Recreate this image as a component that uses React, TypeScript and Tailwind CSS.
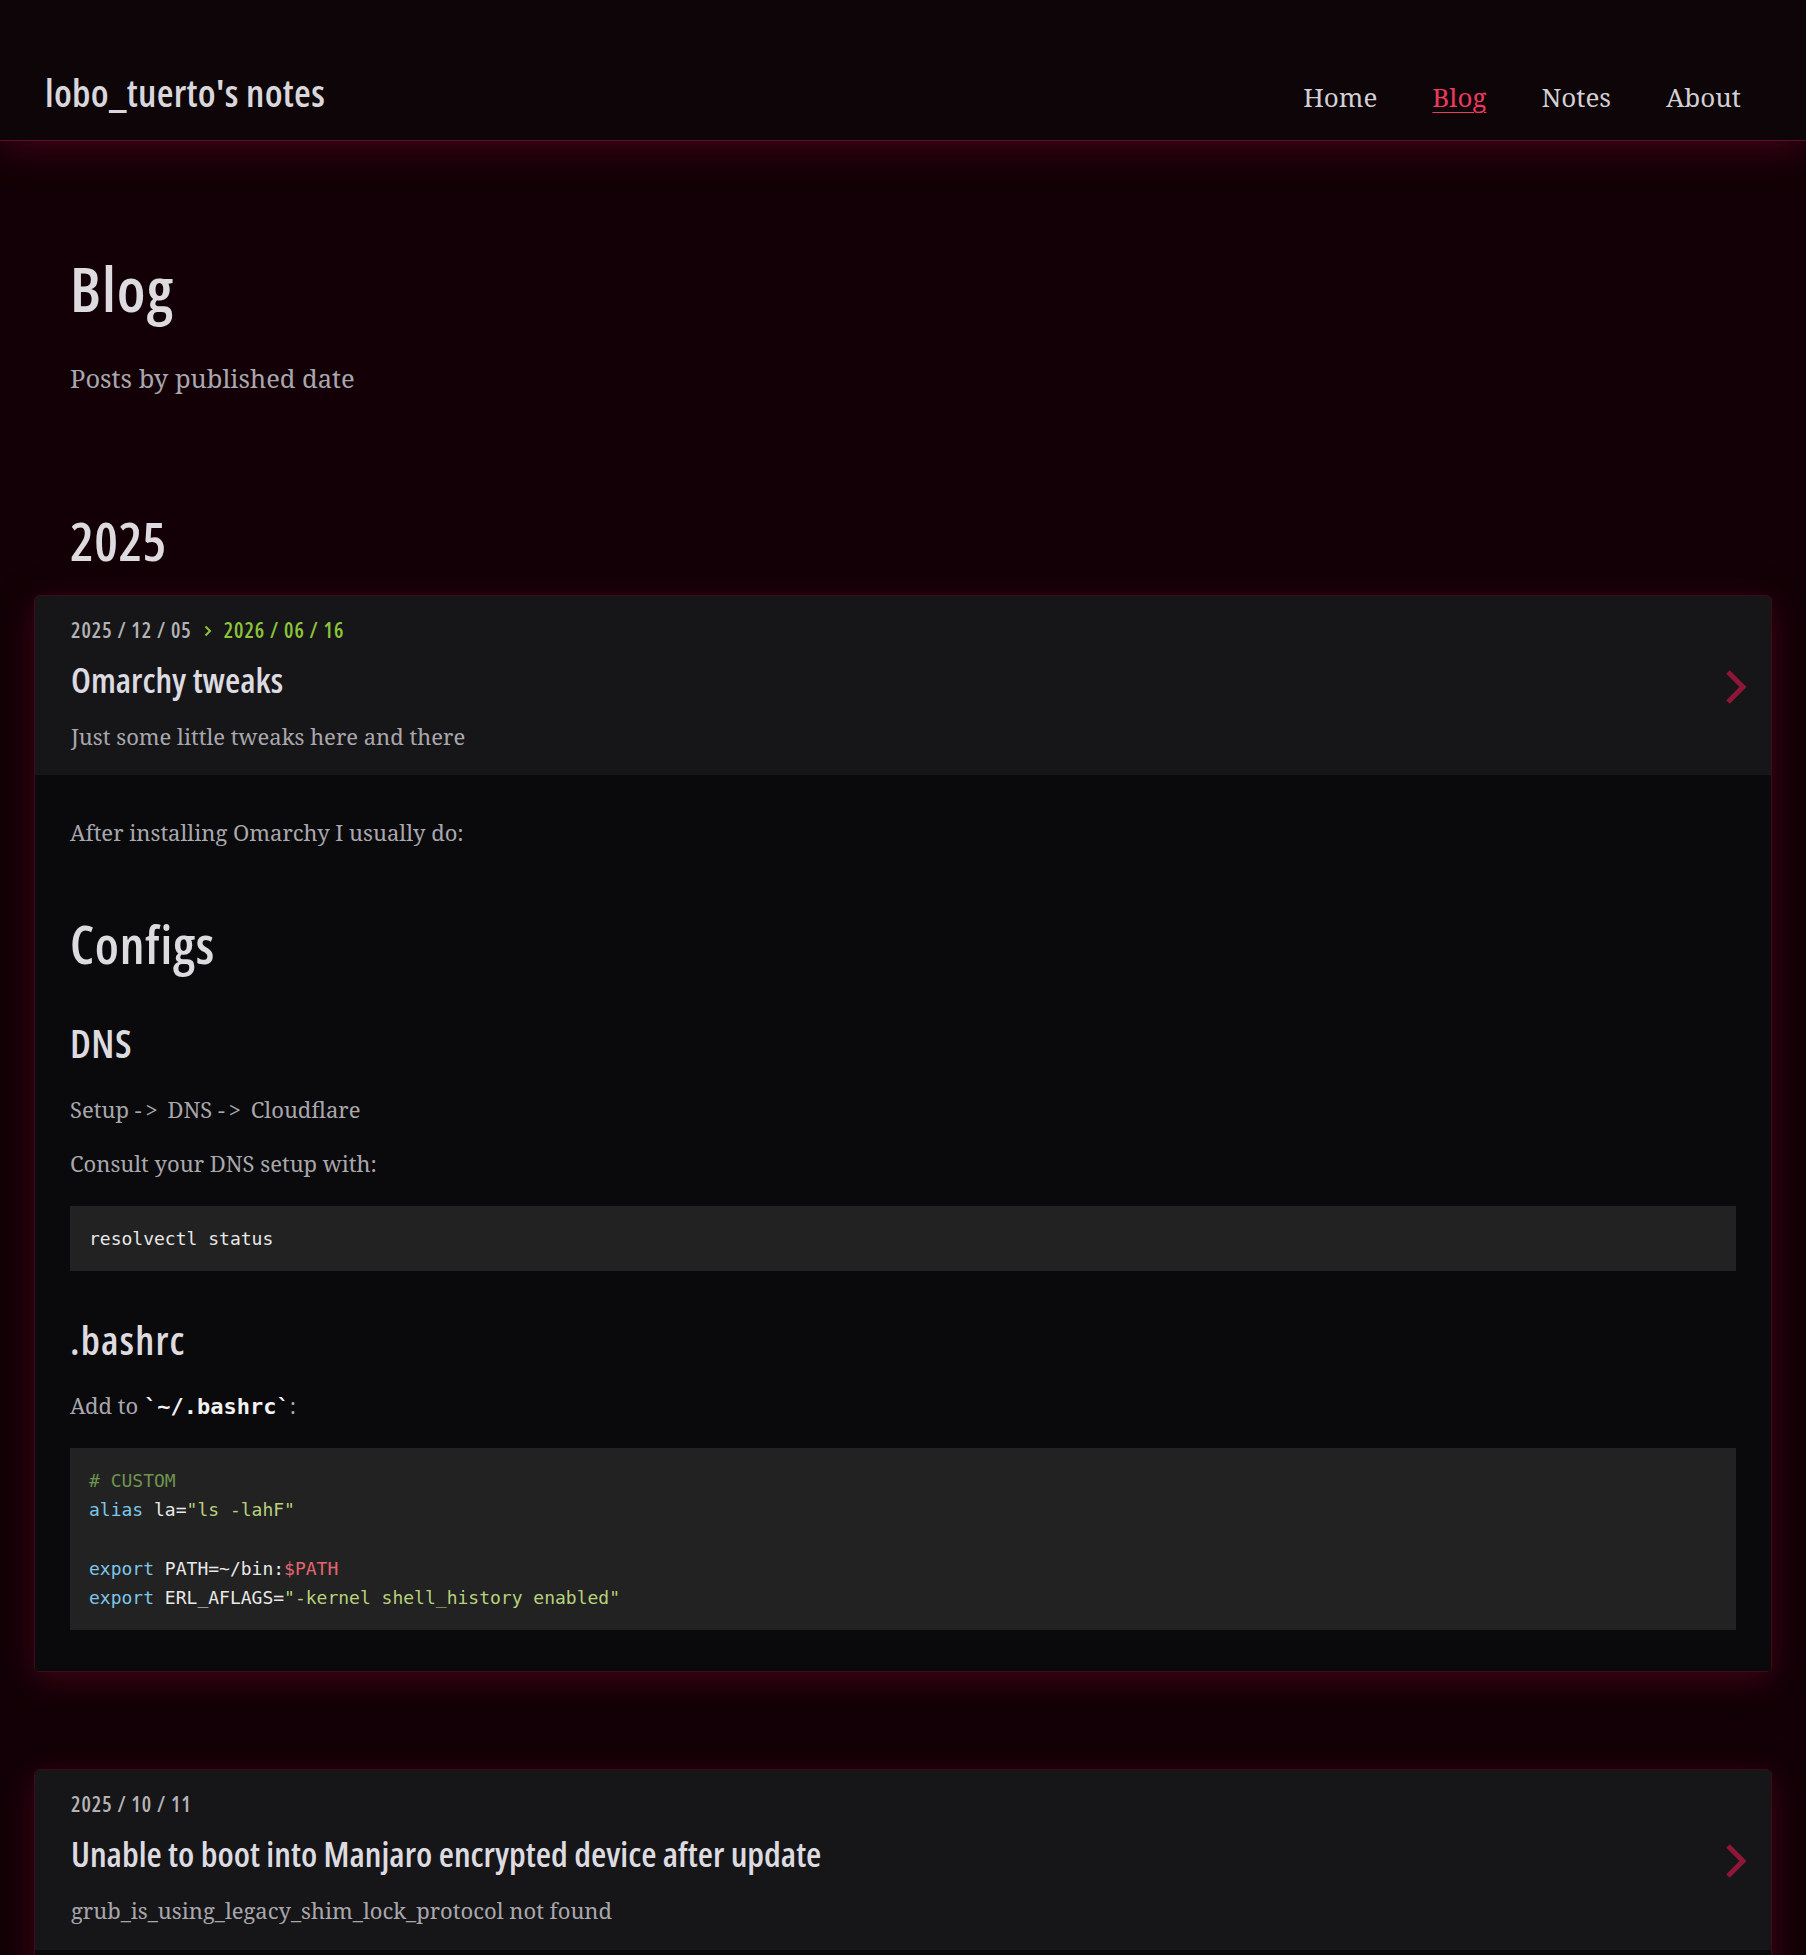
import React from "react";

const H = "font-['Open_Sans',sans-serif] [font-stretch:75%]";
const S = "font-['Noto_Serif',serif]";
const M = "font-['DejaVu_Sans_Mono',monospace]";

function Chevron() {
  return (
    <svg width="24" height="36" viewBox="0 0 24 36" className="shrink-0">
      <path d="M4 3 L19 18 L4 33" fill="none" stroke="#8f1639" strokeWidth="5" />
    </svg>
  );
}

function SmallChevron() {
  return (
    <svg width="8" height="12" viewBox="0 0 8 12" className="mx-[12px] inline-block">
      <path d="M1.5 1.5 L6 6 L1.5 10.5" fill="none" stroke="#8cc43a" strokeWidth="2" />
    </svg>
  );
}

function CardHead({
  date,
  updated,
  title,
  desc,
  pb,
}: {
  date: string;
  updated?: string;
  title: string;
  desc: string;
  pb: string;
}) {
  return (
    <div className={`flex items-center justify-between bg-[#161618] pl-[36px] pr-[23px] pt-[24px] ${pb}`}>
      <div className="flex flex-col">
        <div className={`${H} flex items-center text-[21px] leading-[21px] font-semibold tracking-[1px] text-[#b4b2b7]`}>
          <span>{date}</span>
          {updated && (
            <>
              <SmallChevron />
              <span className="text-[#8cc43a]">{updated}</span>
            </>
          )}
        </div>
        <div className={`${H} mt-[21px] text-[35px] leading-[36px] font-semibold text-[#dddbe0]`}>{title}</div>
        <div className={`${S} mt-[22px] text-[22px] leading-[33px] text-[#a9a7ad]`}>{desc}</div>
      </div>
      <Chevron />
    </div>
  );
}

function Arrow() {
  return <span className="tracking-[4px]">-&gt;</span>;
}

export default function App() {
  return (
    <div className="relative h-[1955px] overflow-hidden bg-[#120006]">
      <header className="relative z-10 flex h-[141px] items-baseline justify-between border-b border-[#5a0f27] bg-[#0d0508] pl-[45px] pr-[65px] pt-[70px] shadow-[0_6px_36px_rgba(110,8,38,0.55)]">
        <div className={`${H} text-[38.5px] leading-[45px] font-semibold tracking-[0.3px] text-[#d9d7dc]`}>lobo_tuerto's notes</div>
        <nav className={`${S} flex gap-[55px] text-[26px] leading-[39px] text-[#d2d0d4]`}>
          <span>Home</span>
          <span className="text-[#ea3a5f] underline decoration-1 underline-offset-[5px]">Blog</span>
          <span>Notes</span>
          <span>About</span>
        </nav>
      </header>

      <main className="px-[34px]">
        <div className="px-[36px]">
          <h1 className={`${H} mt-[115px] text-[62px] leading-[64px] font-semibold tracking-[1px] text-[#dddbe0]`}>Blog</h1>
          <p className={`${S} mt-[40px] text-[25.5px] leading-[36px] text-[#a9a7ad]`}>Posts by published date</p>
          <h2 className={`${H} mt-[118px] text-[53px] leading-[54px] font-semibold tracking-[0.5px] text-[#dddbe0]`}>2025</h2>
        </div>

        <article className="mt-[27px] overflow-hidden rounded-[5px] border border-[#3e0b1b] shadow-[0_8px_32px_rgba(110,8,38,0.5)]">
          <CardHead
            date="2025 / 12 / 05"
            updated="2026 / 06 / 16"
            title="Omarchy tweaks"
            desc="Just some little tweaks here and there"
            pb="pb-[22px]"
          />
          <div className={`bg-[#0a0a0c] px-[35px] pt-[41px] pb-[41px] ${S} text-[22px] leading-[33px] text-[#a9a7ad]`}>
            <p>After installing Omarchy I usually do:</p>
            <h2 className={`${H} mt-[69px] text-[52px] leading-[52px] font-semibold tracking-[0.8px] text-[#dddbe0]`}>Configs</h2>
            <h3 className={`${H} mt-[53px] text-[39px] leading-[40px] font-semibold tracking-[0.5px] text-[#dddbe0]`}>DNS</h3>
            <p className="mt-[30px]">
              Setup <Arrow /> DNS <Arrow /> Cloudflare
            </p>
            <p className="mt-[21px]">Consult your DNS setup with:</p>
            <pre className={`${M} mt-[26px] bg-[#222222] px-[19px] py-[18px] text-[18px] leading-[29px] text-[#e8e8e8]`}>resolvectl status</pre>
            <h3 className={`${H} mt-[49px] text-[40px] leading-[40px] font-semibold tracking-[1.2px] text-[#dddbe0]`}>.bashrc</h3>
            <p className="mt-[29px]">
              Add to <code className={`${M} text-[22px] font-bold text-[#f2f2f2]`}>`~/.bashrc`</code>:
            </p>
            <pre className={`${M} mt-[25px] bg-[#222222] px-[19px] py-[18px] text-[18px] leading-[29.3px] text-[#e8e8e8]`}>
              <span className="text-[#6e9450]"># CUSTOM</span>
              {"\n"}
              <span className="text-[#7cc6ea]">alias</span> la=<span className="text-[#b9d27e]">"ls -lahF"</span>
              {"\n\n"}
              <span className="text-[#7cc6ea]">export</span> PATH=~/bin:<span className="text-[#e4646f]">$PATH</span>
              {"\n"}
              <span className="text-[#7cc6ea]">export</span> ERL_AFLAGS=<span className="text-[#b9d27e]">"-kernel shell_history enabled"</span>
            </pre>
          </div>
        </article>

        <article className="mt-[97px] overflow-hidden rounded-[5px] border border-[#3e0b1b] shadow-[0_8px_32px_rgba(110,8,38,0.5)]">
          <CardHead
            date="2025 / 10 / 11"
            title="Unable to boot into Manjaro encrypted device after update"
            desc="grub_is_using_legacy_shim_lock_protocol not found"
            pb="pb-[23px]"
          />
          <div className="h-[200px] bg-[#0a0a0c]" />
        </article>
      </main>

      <div className="absolute right-0 top-0 h-[55px] w-[5px] rounded-[2px] bg-[#8a8a8a]" />
    </div>
  );
}
